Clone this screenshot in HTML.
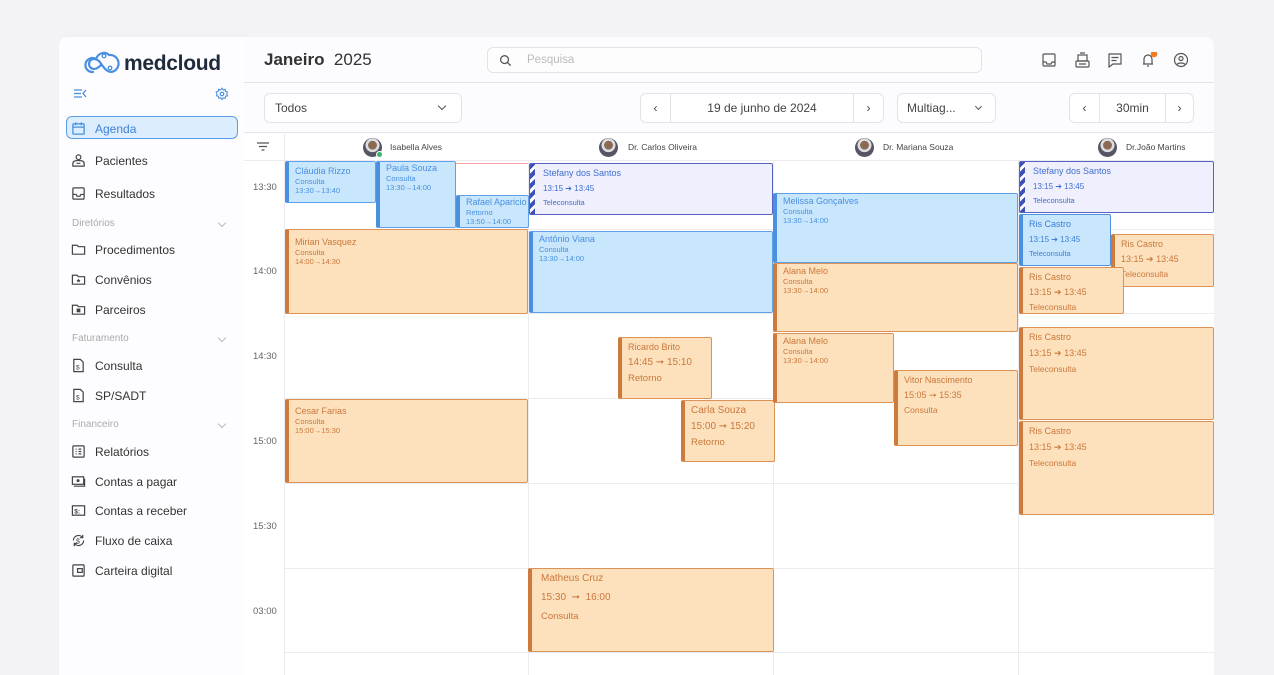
<!DOCTYPE html>
<html><head><meta charset="utf-8"><style>
*{box-sizing:border-box;margin:0;padding:0}
body{width:1274px;height:675px;background:#f3f2f6;font-family:"Liberation Sans",sans-serif;position:relative;overflow:hidden;color:#333}
.abs{position:absolute}
#side{left:59px;top:37px;width:185px;height:638px;background:#fdfcfe;border-radius:8px 0 0 0;box-shadow:2px 0 4px rgba(0,0,0,.04)}
#main{left:244px;top:37px;width:970px;height:638px;background:#fcfbfd;border-radius:0 8px 0 0}
.nav{position:absolute;left:12px;font-size:12px;color:#333;display:flex;align-items:center;gap:9px}
.nav svg{width:15px;height:15px}
.sec{position:absolute;left:13px;font-size:10px;color:#aaa;width:157px}
.sec:after{content:"";position:absolute;right:4px;top:2px;width:5px;height:5px;border-right:1px solid #bbb;border-bottom:1px solid #bbb;transform:rotate(45deg)}
.box{position:absolute;border:1px solid #e3e2e7;border-radius:6px;background:#fff;font-size:12px;color:#444;display:flex;align-items:center}
.chev{width:6px;height:6px;border-right:1.3px solid #555;border-bottom:1.3px solid #555;transform:rotate(45deg)}
.hl{position:absolute;left:285px;width:929px;height:1px;background:#ecebf0}
.vl{position:absolute;top:160px;width:1px;height:515px;background:#ecebf0}
.tm{position:absolute;left:253px;font-size:9.5px;color:#666}
.ev{position:absolute;border-radius:2px;padding:4px 0 0 6px;overflow:hidden;line-height:1.2}
.ev .n{font-size:9px}
.ev .s{font-size:7.5px}
.b{background:#c8e6fc;border:1px solid #5fa0e6;border-left:4px solid #4a8fe0;color:#4a90e2}
.o{background:#fde1bd;border:1px solid #dd9357;border-left:4px solid #cd7b3c;color:#c9783c}
.t{background:#efeffd;border:1px solid #5563c4;color:#3d6fcf;padding-left:13px}
.t:before{content:"";position:absolute;left:0;top:0;bottom:0;width:5px;background:repeating-linear-gradient(135deg,#3d4fb8 0 4px,#fff 4px 7px)}
.big .n{font-size:9px}.big .s{font-size:9px;margin-top:5px}
.av{position:absolute;top:138px;width:19px;height:19px;border-radius:50%;background:radial-gradient(circle at 50% 38%,#8a6a55 0 28%,#ddd 30% 45%,#556 47%)}
.hn{position:absolute;top:142px;font-size:8.5px;color:#444}
</style></head><body>
<div id="side" class="abs">
 <svg class="abs" style="left:24px;top:13px" width="38" height="26" viewBox="0 0 38 26"><path d="M10 22a7 7 0 1 1 3-13c2-6 9-8 13-4a7 7 0 1 1 2 17c-4 0-7-4-9-7s-4-6-8-6a5 5 0 0 0 0 10c3 0 5-2 7-4" fill="none" stroke="#4a90e2" stroke-width="2.2" stroke-linecap="round"/><circle cx="21" cy="6" r="1.8" fill="#fff" stroke="#4a90e2" stroke-width="1.3"/><circle cx="27" cy="18" r="1.8" fill="#fff" stroke="#4a90e2" stroke-width="1.3"/></svg>
 <div class="abs" style="left:65px;top:15px;font-size:21px;font-weight:bold;color:#1f2a3a;letter-spacing:-.3px">medcloud</div>
 <svg class="abs" style="left:14px;top:51px" width="14" height="11" viewBox="0 0 14 11"><path d="M1 2h8M1 5.5h7M1 9h8M13 2l-3 3.5 3 3.5" fill="none" stroke="#4a90e2" stroke-width="1.3"/></svg>
 <svg class="abs" style="left:156px;top:50px" width="14" height="14" viewBox="0 0 24 24"><circle cx="12" cy="12" r="3" fill="none" stroke="#4a90e2" stroke-width="2"/><path d="M12 2l2 3 3.5-1 .5 3.5 3.5 1-1.5 3.5 1.5 3-3.5 1-.5 3.5-3.5-1-2 3-2-3-3.5 1-.5-3.5-3.5-1L3.5 12 2 8.5l3.5-1L6 4l3.5 1z" fill="none" stroke="#4a90e2" stroke-width="1.8"/></svg>
 <div class="abs" style="left:7px;top:79px;width:172px;height:23px;background:#dcedfd;border:1px solid #5b9ee6;border-radius:6px"></div>
 <div class="nav" style="top:84px;color:#3d82d8"><svg viewBox="0 0 16 16"><rect x="2" y="3" width="12" height="11" rx="1" fill="none" stroke="#4a90e2" stroke-width="1.4"/><path d="M2 6.5h12M5 1.5v3M11 1.5v3" stroke="#4a90e2" stroke-width="1.4"/></svg>Agenda</div>
 <div class="nav" style="top:116px"><svg viewBox="0 0 16 16"><circle cx="8" cy="4.5" r="2.5" fill="none" stroke="#444" stroke-width="1.3"/><path d="M2 14v-3c0-2 2-3 6-3s6 1 6 3v3zM6 11h4" fill="none" stroke="#444" stroke-width="1.3"/></svg>Pacientes</div>
 <div class="nav" style="top:149px"><svg viewBox="0 0 16 16"><rect x="2" y="2" width="12" height="12" rx="1" fill="none" stroke="#444" stroke-width="1.3"/><path d="M2 9h3.5l1 2h3l1-2H14" fill="none" stroke="#444" stroke-width="1.3"/></svg>Resultados</div>
 <div class="sec" style="top:181px">Diretórios</div>
 <div class="nav" style="top:205px"><svg viewBox="0 0 16 16"><path d="M1.5 3.5h5l1.5 1.5h6.5v8h-13z" fill="none" stroke="#444" stroke-width="1.3"/></svg>Procedimentos</div>
 <div class="nav" style="top:235px"><svg viewBox="0 0 16 16"><path d="M1.5 3.5h5l1.5 1.5h6.5v8h-13z" fill="none" stroke="#444" stroke-width="1.3"/><path d="M8 7l.7 1.4 1.5.2-1.1 1 .3 1.5L8 10.4l-1.4.7.3-1.5-1.1-1 1.5-.2z" fill="#444"/></svg>Convênios</div>
 <div class="nav" style="top:265px"><svg viewBox="0 0 16 16"><path d="M1.5 3.5h5l1.5 1.5h6.5v8h-13z" fill="none" stroke="#444" stroke-width="1.3"/><rect x="6" y="7" width="4" height="4" fill="#444"/></svg>Parceiros</div>
 <div class="sec" style="top:296px">Faturamento</div>
 <div class="nav" style="top:321px"><svg viewBox="0 0 16 16"><path d="M3 1.5h7l3 3v10H3z" fill="none" stroke="#444" stroke-width="1.3"/><text x="5.3" y="12" font-size="7" fill="#444">$</text></svg>Consulta</div>
 <div class="nav" style="top:351px"><svg viewBox="0 0 16 16"><path d="M3 1.5h7l3 3v10H3z" fill="none" stroke="#444" stroke-width="1.3"/><text x="5.3" y="12" font-size="7" fill="#444">$</text></svg>SP/SADT</div>
 <div class="sec" style="top:382px">Financeiro</div>
 <div class="nav" style="top:407px"><svg viewBox="0 0 16 16"><rect x="2" y="2" width="12" height="12" rx="1" fill="none" stroke="#444" stroke-width="1.3"/><path d="M5 5.5h1M5 8h1M5 10.5h1M8 5.5h3M8 8h3M8 10.5h3" stroke="#444" stroke-width="1.3"/></svg>Relatórios</div>
 <div class="nav" style="top:437px"><svg viewBox="0 0 16 16"><rect x="1.5" y="3" width="12" height="8" fill="none" stroke="#444" stroke-width="1.3"/><circle cx="7.5" cy="7" r="1.6" fill="#444"/><path d="M3 13h11.5V5" fill="none" stroke="#444" stroke-width="1.3"/></svg>Contas a pagar</div>
 <div class="nav" style="top:466px"><svg viewBox="0 0 16 16"><rect x="1.5" y="3" width="13" height="10" fill="none" stroke="#444" stroke-width="1.3"/><text x="3.5" y="11" font-size="7" font-weight="bold" fill="#444">$:</text></svg>Contas a receber</div>
 <div class="nav" style="top:496px"><svg viewBox="0 0 16 16"><path d="M2.5 8a5.5 5.5 0 0 1 10-3M13.5 8a5.5 5.5 0 0 1-10 3M12.5 2v3h-3M3.5 14v-3h3" fill="none" stroke="#444" stroke-width="1.3"/><text x="5.3" y="11" font-size="7.5" fill="#444">$</text></svg>Fluxo de caixa</div>
 <div class="nav" style="top:526px"><svg viewBox="0 0 16 16"><rect x="2" y="2" width="12" height="12" rx="1" fill="none" stroke="#444" stroke-width="1.3"/><rect x="7" y="6" width="5" height="4" fill="none" stroke="#444" stroke-width="1.3"/></svg>Carteira digital</div>
</div>

<div id="main" class="abs"></div>
<div class="abs" style="left:264px;top:50px;font-size:17px;color:#333"><b>Janeiro</b>&nbsp; 2025</div>
<div class="box" style="left:487px;top:47px;width:495px;height:26px;background:#fdfdfe"><svg style="margin-left:11px" width="13" height="13" viewBox="0 0 14 14"><circle cx="6" cy="6" r="4.2" fill="none" stroke="#555" stroke-width="1.4"/><path d="M9 9l3.5 3.5" stroke="#555" stroke-width="1.4"/></svg><span style="margin-left:15px;color:#bbb;font-size:11.5px">Pesquisa</span></div>
<svg class="abs" style="left:1042px;top:52px" width="150" height="16" viewBox="0 0 150 16">
 <g fill="none" stroke="#555" stroke-width="1.2"><rect x="1" y="2" width="12" height="12" rx="1"/><path d="M1 10h3l1 2h4l1-2h3"/>
 <rect x="34" y="9" width="13" height="6" rx="1"/><rect x="36" y="3" width="9" height="6"/><path d="M38 1h5M37 12h7"/>
 <path d="M67 2h12v10h-8l-4 3z M69.5 5.5h7M69.5 8.5h5"/>
 <path d="M101 12h10M102 12V7a4 4 0 0 1 8 0v5M105 14h2"/>
 <circle cx="139" cy="8" r="6.5"/><circle cx="139" cy="6.5" r="2"/><path d="M135 12.5c1-2 7-2 8 0"/></g>
 <circle cx="112" cy="2" r="3.3" fill="#f57c20"/></svg>
<div class="abs" style="left:244px;top:82px;width:970px;height:1px;background:#e4e3e8"></div>

<div class="box" style="left:264px;top:93px;width:198px;height:30px"><span style="margin-left:10px;flex:1">Todos</span><span class="chev" style="margin-right:16px;margin-top:-4px"></span></div>
<div class="box" style="left:640px;top:93px;width:244px;height:30px"><span style="width:30px;text-align:center;border-right:1px solid #e3e2e7;line-height:28px">‹</span><span style="flex:1;text-align:center">19 de junho de 2024</span><span style="width:30px;text-align:center;border-left:1px solid #e3e2e7;line-height:28px">›</span></div>
<div class="box" style="left:897px;top:93px;width:99px;height:30px"><span style="margin-left:9px;flex:1">Multiag...</span><span class="chev" style="margin-right:14px;margin-top:-4px;width:5px;height:5px"></span></div>
<div class="box" style="left:1069px;top:93px;width:125px;height:30px"><span style="width:30px;text-align:center;border-right:1px solid #e3e2e7;line-height:28px">‹</span><span style="flex:1;text-align:center">30min</span><span style="width:28px;text-align:center;border-left:1px solid #e3e2e7;line-height:28px">›</span></div>

<div class="abs" style="left:244px;top:132px;width:970px;height:543px;background:#fff;border-top:1px solid #e4e3e8"></div>
<div class="abs" style="left:244px;top:160px;width:970px;height:1px;background:#ecebf0"></div>
<svg class="abs" style="left:257px;top:142px" width="12" height="9" viewBox="0 0 12 9"><path d="M0 1h12M2 4.5h8M4.5 8h3" stroke="#555" stroke-width="1.2"/></svg>
<div class="vl" style="left:284px;top:132px;height:543px"></div>
<div class="vl" style="left:528px"></div><div class="vl" style="left:773px"></div><div class="vl" style="left:1018px"></div>
<div class="av" style="left:363px"></div><div class="abs" style="left:376px;top:151px;width:7px;height:7px;border-radius:50%;background:#3cb371;border:1px solid #fff"></div><div class="hn" style="left:390px">Isabella Alves</div>
<div class="av" style="left:599px"></div><div class="hn" style="left:628px">Dr. Carlos Oliveira</div>
<div class="av" style="left:855px"></div><div class="hn" style="left:883px">Dr. Mariana Souza</div>
<div class="av" style="left:1098px"></div><div class="hn" style="left:1126px">Dr.João Martins</div>

<div class="hl" style="top:229px"></div><div class="hl" style="top:313px"></div><div class="hl" style="top:398px"></div><div class="hl" style="top:483px"></div><div class="hl" style="top:568px"></div><div class="hl" style="top:652px"></div>
<div class="tm" style="top:182px">13:30</div><div class="tm" style="top:266px">14:00</div><div class="tm" style="top:351px">14:30</div><div class="tm" style="top:436px">15:00</div><div class="tm" style="top:521px">15:30</div><div class="tm" style="top:606px">03:00</div>
<div class="abs" style="left:285px;top:163px;width:243px;height:1px;background:#f2a0a0"></div>

<div class="ev b" style="left:285px;top:161px;width:91px;height:42px"><div class="n">Cláudia Rizzo</div><div class="s">Consulta<br>13:30→13:40</div></div>
<div class="ev b" style="left:376px;top:161px;width:80px;height:67px;padding-top:1px"><div class="n">Paula Souza</div><div class="s">Consulta<br>13:30→14:00</div></div>
<div class="ev b" style="left:456px;top:195px;width:73px;height:33px;padding-top:1px"><div class="n">Rafael Aparicio</div><div class="s">Retorno<br>13:50→14:00</div></div>
<div class="ev o" style="left:285px;top:229px;width:243px;height:85px;padding-top:7px"><div class="n">Mirian Vasquez</div><div class="s">Consulta<br>14:00→14:30</div></div>
<div class="ev o" style="left:285px;top:399px;width:243px;height:84px;padding-top:6px"><div class="n">Cesar Farias</div><div class="s">Consulta<br>15:00→15:30</div></div>
<div class="ev o" style="left:618px;top:337px;width:94px;height:62px"><div class="n">Ricardo Brito</div><div style="font-size:10px;margin-top:4px">14:45 ➞ 15:10</div><div style="font-size:9.5px;margin-top:4px">Retorno</div></div>
<div class="ev o" style="left:681px;top:400px;width:94px;height:62px"><div style="font-size:10px">Carla Souza</div><div style="font-size:10px;margin-top:4px">15:00 ➞ 15:20</div><div style="font-size:9.5px;margin-top:4px">Retorno</div></div>
<div class="ev o" style="left:528px;top:568px;width:246px;height:84px;padding:4px 0 0 9px"><div style="font-size:10px">Matheus Cruz</div><div style="font-size:10px;margin-top:7px">15:30 &nbsp;➞&nbsp; 16:00</div><div style="font-size:9.5px;margin-top:7px">Consulta</div></div>

<div class="ev t big" style="left:529px;top:163px;width:244px;height:52px"><div class="n">Stefany dos Santos</div><div class="s" style="font-size:8px">13:15 ➔ 13:45</div><div class="s" style="font-size:7.5px">Teleconsulta</div></div>
<div class="ev b" style="left:529px;top:231px;width:244px;height:82px;padding-top:2px"><div class="n">Antônio Viana</div><div class="s">Consulta<br>13:30→14:00</div></div>

<div class="ev b" style="left:773px;top:193px;width:245px;height:70px;padding-top:2px"><div class="n">Melissa Gonçalves</div><div class="s">Consulta<br>13:30→14:00</div></div>
<div class="ev o" style="left:773px;top:263px;width:245px;height:69px;padding-top:2px"><div class="n">Alana Melo</div><div class="s">Consulta<br>13:30→14:00</div></div>
<div class="ev o" style="left:773px;top:333px;width:121px;height:70px;padding-top:2px"><div class="n">Alana Melo</div><div class="s">Consulta<br>13:30→14:00</div></div>
<div class="ev o" style="left:894px;top:370px;width:124px;height:76px"><div class="n">Vitor Nascimento</div><div style="font-size:9px;margin-top:4px">15:05 ➞ 15:35</div><div style="font-size:8.5px;margin-top:4px">Consulta</div></div>

<div class="ev t big" style="left:1019px;top:161px;width:195px;height:52px"><div class="n">Stefany dos Santos</div><div class="s" style="font-size:8px">13:15 ➔ 13:45</div><div class="s" style="font-size:7.5px">Teleconsulta</div></div>
<div class="ev b big" style="left:1019px;top:214px;width:92px;height:52px;border:1px solid #4f8fe0;border-left:4px solid #4a8fe0;color:#3d7fd8"><div class="n">Ris Castro</div><div class="s" style="font-size:8px">13:15 ➔ 13:45</div><div class="s" style="font-size:7.5px">Teleconsulta</div></div>
<div class="ev o" style="left:1111px;top:234px;width:103px;height:53px"><div class="n">Ris Castro</div><div style="font-size:9px;margin-top:4px">13:15 ➔ 13:45</div><div style="font-size:8.5px;margin-top:4px">Teleconsulta</div></div>
<div class="ev o" style="left:1019px;top:267px;width:105px;height:47px"><div class="n">Ris Castro</div><div style="font-size:9px;margin-top:4px">13:15 ➔ 13:45</div><div style="font-size:8.5px;margin-top:4px">Teleconsulta</div></div>
<div class="ev o" style="left:1019px;top:327px;width:195px;height:93px"><div class="n">Ris Castro</div><div style="font-size:9px;margin-top:5px">13:15 ➔ 13:45</div><div style="font-size:8.5px;margin-top:5px">Teleconsulta</div></div>
<div class="ev o" style="left:1019px;top:421px;width:195px;height:94px"><div class="n">Ris Castro</div><div style="font-size:9px;margin-top:5px">13:15 ➔ 13:45</div><div style="font-size:8.5px;margin-top:5px">Teleconsulta</div></div>
</body></html>
